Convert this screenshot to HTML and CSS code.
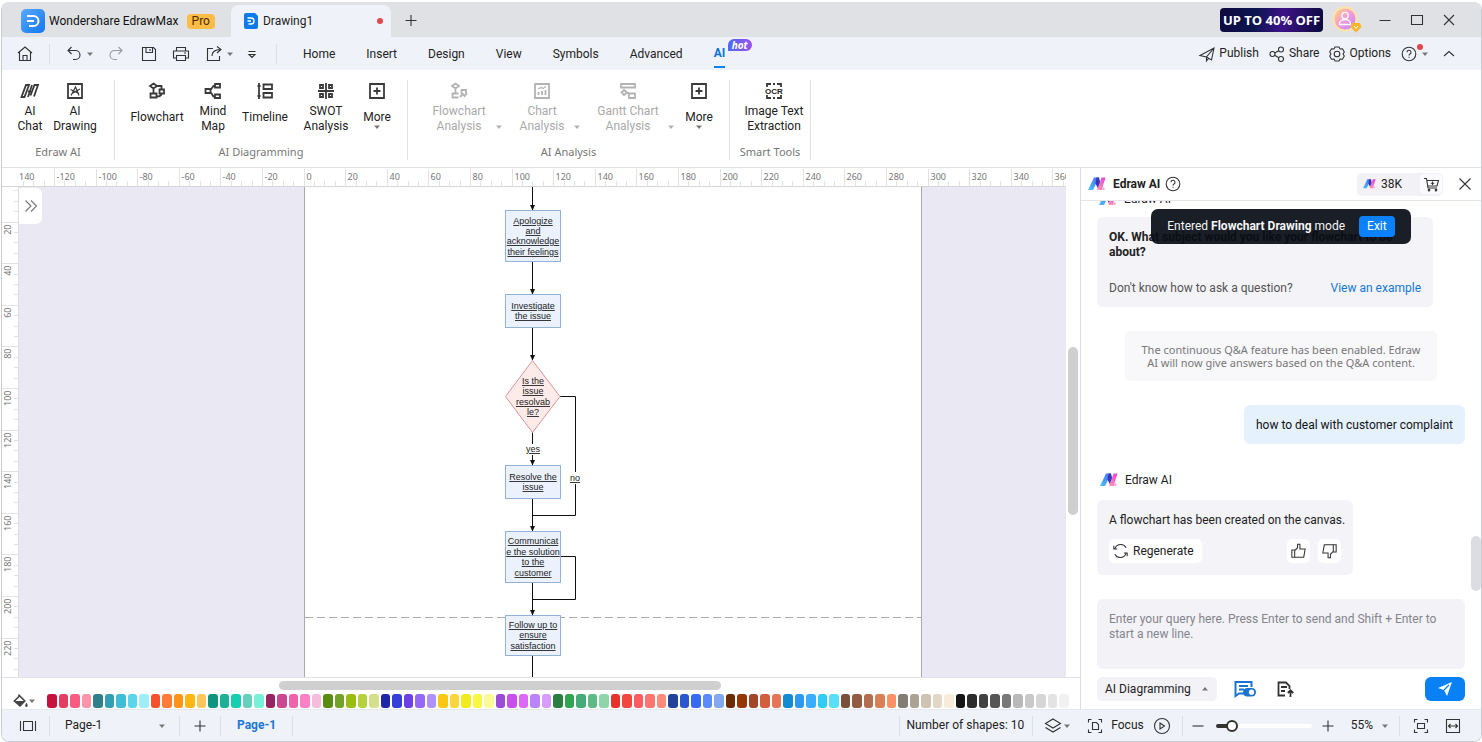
FILE: index.html
```html
<!DOCTYPE html>
<html lang="en">
<head>
	<meta charset="utf-8">
	<title>Wondershare EdrawMax</title>
	<link rel="stylesheet" href="styles.css">
</head>
<body>
	<svg class="defs" width="0" height="0">
		<defs>
			<linearGradient id="grad-blue" x1="0" y1="0" x2="1" y2="1">
				<stop offset="0" stop-color="#5aa9ff"/><stop offset="1" stop-color="#1277f0"/>
			</linearGradient>
			<linearGradient id="grad-left" x1="0" y1="1" x2="1" y2="0">
				<stop offset="0" stop-color="#4fc3ff"/><stop offset="1" stop-color="#3f6bf0"/>
			</linearGradient>
			<linearGradient id="grad-right" x1="0" y1="1" x2="1" y2="0">
				<stop offset="0" stop-color="#ff9fb8"/><stop offset="1" stop-color="#e33bd0"/>
			</linearGradient>
			<linearGradient id="grad-user" x1="0" y1="0" x2="1" y2="1">
				<stop offset="0" stop-color="#ffd27a"/><stop offset="0.5" stop-color="#f59bd8"/><stop offset="1" stop-color="#b685ff"/>
			</linearGradient>
			<symbol id="ai-logo" viewBox="0 0 18 16">
				<path d="M6 1.500h5L5 14H0z" fill="url(#grad-left)"/>
				<path d="M8.500 1.500H11l1.500 6-2.500 5-2.500-5z" fill="#3a34b8"/>
				<path d="M13.500 1.500h4L15 9.500l-1 4.500H9z" fill="url(#grad-right)"/>
				<circle cx="15.500" cy="12.800" r="1.200" fill="#ff9fb8"/>
			</symbol>
			<symbol id="plus-box" viewBox="0 0 20 20">
				<path d="M3 3h14v14H3zM10 6.500v7M6.500 10h7"/>
			</symbol>
			<symbol id="caret" viewBox="0 0 8 8"><path d="M1 2.500h6L4 6z"/></symbol>
		</defs>
	</svg>

	<div class="window">
		<header class="titlebar">
			<svg class="app-logo" viewBox="0 0 24 24" width="24" height="24">
				<rect width="24" height="24" rx="5" fill="url(#grad-blue)"/>
				<path d="M6 7h6.500a5 5 0 0 1 0 10H8M6 12h7" fill="none" stroke="#fff" stroke-width="2"/>
			</svg>
			<span class="app-name">Wondershare EdrawMax</span>
			<span class="pro">Pro</span>
			<div class="doc-tab">
				<svg viewBox="0 0 14 16" width="14" height="16">
					<path d="M2 0h9l3 3v11a2 2 0 0 1-2 2H2a2 2 0 0 1-2-2V2a2 2 0 0 1 2-2z" fill="#0f7bea"/>
					<path d="M3.500 5h3.500a3 3 0 0 1 0 6H4.500M3.500 8H7" fill="none" stroke="#fff" stroke-width="1.300"/>
				</svg>
				<span>Drawing1</span>
				<i class="unsaved"></i>
			</div>
			<button class="icon-btn" aria-label="New tab"><svg class="line" viewBox="0 0 20 20"><path d="M10 5v11M4.500 10.500h11"/></svg></button>
			<div class="spacer"></div>
			<a class="promo" href="#">UP TO 40% OFF</a>
			<svg class="avatar" viewBox="0 0 30 28" width="30" height="28">
				<circle cx="13" cy="13" r="12.500" fill="#ffe3a6"/>
				<circle cx="13" cy="13" r="10.500" fill="url(#grad-user)"/>
				<g fill="none" stroke="#fff" stroke-width="1.300"><circle cx="13" cy="9.500" r="3.200"/><path d="M7.500 18.500v-1a5.500 4 0 0 1 11 0v1z"/></g>
				<path d="M20 17h8l1.500 4-5.500 5.500L18.500 21z" fill="#f7b52c"/>
				<path d="M22 20l2 2.500 2-2.500" fill="none" stroke="#fff"/>
			</svg>
			<div class="win-btns">
				<button class="icon-btn" aria-label="Minimize"><svg class="line" viewBox="0 0 20 20"><path d="M4.500 10.500h11"/></svg></button>
				<button class="icon-btn" aria-label="Maximize"><svg class="line" viewBox="0 0 20 20"><path d="M4.500 5.500h11v9h-11z"/></svg></button>
				<button class="icon-btn" aria-label="Close"><svg class="line" viewBox="0 0 20 20"><path d="M5 5l10 10M15 5L5 15"/></svg></button>
			</div>
		</header>

		<div class="toolbar">
			<div class="quick">
				<button class="icon-btn home-btn" aria-label="Home"><svg class="line" viewBox="0 0 20 20"><path d="M3 9l7-6 7 6M4.500 8v8.500h11V8M8 16.500v-5h4v5"/></svg></button>
				<i class="vline"></i>
				<button class="icon-btn" aria-label="Undo"><svg class="line" viewBox="0 0 20 20"><path d="M7.500 3L4 6.500 7.500 10M4 6.500h7.500a4.500 4.500 0 0 1 0 9H9"/></svg></button>
				<svg class="caret" width="8" height="8"><use href="#caret"/></svg>
				<button class="icon-btn faded redo" aria-label="Redo"><svg class="line" viewBox="0 0 20 20"><path d="M12.500 3L16 6.500 12.500 10M16 6.500H8.500a4.500 4.500 0 0 0 0 9H11"/></svg></button>
				<button class="icon-btn save" aria-label="Save"><svg class="line" viewBox="0 0 20 20"><path d="M3.500 3.500h11l2 2v11h-13zM7 3.500v5h6.500v-5M11 5v2"/></svg></button>
				<button class="icon-btn" aria-label="Print"><svg class="line" viewBox="0 0 20 20"><path d="M5.500 7V3.500h9V7M5.500 14h-3V7h15v7h-3M5.500 11.500h9v5h-9zM13 9h2"/></svg></button>
				<button class="icon-btn export" aria-label="Export"><svg class="line" viewBox="0 0 20 20"><path d="M9 4.500H3.500v12h12V12M8 12c0-4 3-6.500 8.500-6.500M13 2.500l4 3-4 3.500"/></svg></button>
				<svg class="caret" width="8" height="8"><use href="#caret"/></svg>
				<button class="icon-btn" aria-label="Customize"><svg class="line" viewBox="0 0 20 20"><path d="M6.500 7.500h7M7 10.500l3 3 3-3z"/></svg></button>
				<i class="vline"></i>
			</div>
			<nav class="menu">
				<button>Home</button>
				<button>Insert</button>
				<button>Design</button>
				<button>View</button>
				<button>Symbols</button>
				<button>Advanced</button>
				<button class="active">AI<span class="hot">hot</span></button>
			</nav>
			<div class="spacer"></div>
			<div class="actions">
				<button><svg class="line" viewBox="0 0 20 20"><path d="M3 11.500L17 4l-2.500 12-5-3zM17 4l-7.500 9v4l2-2.500"/></svg>Publish</button>
				<button><svg class="line" viewBox="0 0 20 20"><circle cx="5.500" cy="10" r="2.500"/><circle cx="14" cy="5.500" r="2.500"/><circle cx="14" cy="15" r="2.500"/><path d="M7.700 9l4-2.300M7.700 11.200l4 2.500"/></svg>Share</button>
				<button><svg class="line" viewBox="0 0 20 20"><path d="M8 3h4l1 2 2.500-.2 1.800 3.200L16 10l1.300 2-1.800 3.200L13 15l-1 2H8l-1-2-2.500.2L2.700 12 4 10 2.700 8l1.800-3.200L7 5z"/><circle cx="10" cy="10" r="2.800"/></svg>Options</button>
				<button class="help" aria-label="Help"><svg class="line" viewBox="0 0 20 20"><circle cx="10" cy="10" r="6.800"/><path d="M8 8.300a2 2 0 1 1 3 1.700c-.700.400-1 .800-1 1.600M10 12.800v1"/></svg><i class="alert"></i><svg class="caret" width="8" height="8"><use href="#caret"/></svg></button>
				<button class="collapse" aria-label="Collapse ribbon"><svg class="line" viewBox="0 0 20 20"><path d="M5 12l5-4.500 5 4.500"/></svg></button>
			</div>
		</div>

		<section class="ribbon">
			<div class="group g-edraw">
				<div class="tools">
					<button class="tool w40"><svg class="bold" viewBox="0 0 20 20"><path d="M1.500 16L6 4h3L4.500 16zM8 16l4-12M8 10.500h3M10.500 14.500L14.500 4h3.500l-4 11.500"/></svg>AI<br>Chat</button>
					<button class="tool w50"><svg class="bold" viewBox="0 0 20 20"><path d="M3 3h14v14H3z"/><path class="thin" d="M6 14.500L10.500 6l3.500 8.500M5.500 8.500l8.500 4M15 8l-8 4.500"/></svg>AI<br>Drawing</button>
				</div>
				<div class="caption">Edraw AI</div>
			</div>
			<div class="group g-diagram">
				<div class="tools">
					<button class="tool one w60"><svg class="bold" viewBox="0 0 20 20"><path d="M6.500 2.500L10 5 6.500 7.500 3 5zM6.500 7.500V12M3.500 12.500h6v4h-6zM12.500 8.500H17v4h-4.500zM10 5h4.500v3.500M14.500 12.500c0 2-1.500 3-5 3"/></svg>Flowchart</button>
					<button class="tool w52"><svg class="bold" viewBox="0 0 20 20"><path d="M2.500 8h5v4h-5zM12 3h5v3.500h-5zM12 13.500h5V17h-5zM7.500 9l3-4H12M7.500 11l3 4.500H12"/></svg>Mind<br>Map</button>
					<button class="tool one w52"><svg class="bold" viewBox="0 0 20 20"><path d="M4 2v16M2.500 5h3M2.500 15h3M8.500 3.500H17V8H8.500zM8.500 12H17v4.500H8.500z"/></svg>Timeline</button>
					<button class="tool w70"><svg class="bold" viewBox="0 0 20 20"><path d="M10 2v16M2 10h16M4 4h3v3H4zM13 4h3v3h-3zM4 13h3v3H4zM13 13h3v3h-3z"/></svg>SWOT<br>Analysis</button>
					<button class="tool one w32"><svg class="bold"><use href="#plus-box"/></svg>More<svg class="caret" width="8" height="8"><use href="#caret"/></svg></button>
				</div>
				<div class="caption">AI Diagramming</div>
			</div>
			<div class="group g-analysis">
				<div class="tools">
					<button class="tool split w80" disabled><span><svg class="bold" viewBox="0 0 20 20"><path d="M6.500 2.500L10 5 6.500 7.500 3 5zM6.500 7.500V12M9.500 16.500H3.500v-4h6M12.500 13V9H17v4M11 16l3-3 1.500 2 2.500-3"/></svg>Flowchart<br>Analysis</span><svg class="caret" width="8" height="8"><use href="#caret"/></svg></button>
					<button class="tool split w70" disabled><span><svg class="bold" viewBox="0 0 20 20"><path d="M3 3h14v14H3zM6.500 14v-3M10 14v-4M13.500 14v-5"/><path class="thin" d="M6 8l3-1.500 2 1L14 5.500"/></svg>Chart<br>Analysis</span><svg class="caret" width="8" height="8"><use href="#caret"/></svg></button>
					<button class="tool split w86" disabled><span><svg class="bold" viewBox="0 0 20 20"><path d="M3 3h14v3.500H3zM6 9l3 2.500L6 14l-2.500-2.500zM9 12h2M11 12.500h6V17h-6z"/></svg>Gantt Chart<br>Analysis</span><svg class="caret" width="8" height="8"><use href="#caret"/></svg></button>
					<button class="tool one w32"><svg class="bold"><use href="#plus-box"/></svg>More<svg class="caret" width="8" height="8"><use href="#caret"/></svg></button>
				</div>
				<div class="caption">AI Analysis</div>
			</div>
			<div class="group g-smart">
				<div class="tools">
					<button class="tool w64"><svg class="bold" viewBox="0 0 20 20"><path d="M3 6V3h4M9 3h2M13 3h4v3M3 14v3h4M9 17h2M13 17h4v-3"/><text class="ocr" x="10" y="13">OCR</text></svg>Image Text<br>Extraction</button>
				</div>
				<div class="caption">Smart Tools</div>
			</div>
		</section>

		<div class="workspace">
			<main class="editor">
				<svg class="ruler-x" id="ruler-x"></svg>
				<div class="canvas-row">
					<svg class="ruler-y" id="ruler-y"></svg>
					<div class="canvas">
						<svg class="drawing" viewBox="19 187 1047 490" width="1047" height="490">
							<defs>
								<marker id="arrow" markerWidth="6" markerHeight="6" refX="5" refY="3" orient="auto" markerUnits="userSpaceOnUse"><path d="M0 .5L5.500 3 0 5.500z" fill="#111"/></marker>
							</defs>
							<rect class="sheet" x="304.500" y="100" width="617" height="700"/>
							<path class="page-break" d="M305 617.500h617"/>
							<g class="wire">
								<path marker-end="url(#arrow)" d="M532.500 180V210"/>
								<path marker-end="url(#arrow)" d="M532.500 261V294"/>
								<path marker-end="url(#arrow)" d="M532.500 327V360"/>
								<path d="M532.500 432V444"/>
								<path marker-end="url(#arrow)" d="M532.500 455V465"/>
								<path marker-end="url(#arrow)" d="M532.500 498V531"/>
								<path marker-end="url(#arrow)" d="M532.500 582V615"/>
								<path d="M532.500 655V700M560 396.500H575.500V472M575.500 484V515.500H532.500M560 556.500H575.500V599.500H532.500"/>
							</g>
							<g class="box">
								<rect x="505.500" y="210.500" width="55" height="51"/>
								<rect x="505.500" y="294.500" width="55" height="33"/>
								<rect x="505.500" y="465.500" width="55" height="33"/>
								<rect x="505.500" y="531.500" width="55" height="51"/>
								<rect x="505.500" y="615.500" width="55" height="40"/>
							</g>
							<path class="decision" d="M532.500 360.500L560 396.500 532.500 432.500 505.500 396.500z"/>
							<g class="node-text">
								<text x="533" y="224">Apologize</text><text x="533" y="234">and</text><text x="533" y="244">acknowledge</text><text x="533" y="255">their feelings</text>
								<text x="533" y="309">Investigate</text><text x="533" y="319">the issue</text>
								<text x="533" y="384">Is the</text><text x="533" y="394">issue</text><text x="533" y="405">resolvab</text><text x="533" y="415">le?</text>
								<text x="533" y="452">yes</text>
								<text x="575" y="481">no</text>
								<text x="533" y="480">Resolve the</text><text x="533" y="490">issue</text>
								<text x="533" y="544">Communicat</text><text x="533" y="555">e the solution</text><text x="533" y="565">to the</text><text x="533" y="576">customer</text>
								<text x="533" y="628">Follow up to</text><text x="533" y="638">ensure</text><text x="533" y="649">satisfaction</text>
							</g>
						</svg>
						<button class="expand" aria-label="Show symbols"><svg class="line" viewBox="0 0 20 20"><path d="M4.500 4.500L10 10l-5.500 5.500M10 4.500l5.500 5.500-5.500 5.500"/></svg></button>
					</div>
					<div class="vscroll"><i></i></div>
				</div>
				<div class="hscroll"><i></i></div>
				<div class="palette">
					<button class="fill" aria-label="Fill colour"><svg viewBox="0 0 20 20" width="16" height="16"><path d="M8 2l8 8-6 6-7-6 6-6" fill="none" stroke="#444" stroke-width="2"/><path d="M4 10h12l-6 6z" fill="#444"/><path d="M18 12c1 2 1.500 3 1.500 4a1.500 1.500 0 0 1-3 0c0-1 .500-2 1.500-4z" fill="#444"/></svg><svg class="caret" width="8" height="8"><use href="#caret"/></svg></button>
					<div class="swatches" id="swatches"></div>
				</div>
			</main>

			<aside class="panel">
				<div class="panel-head">
					<svg width="18" height="16"><use href="#ai-logo"/></svg>
					<h2>Edraw AI</h2>
					<button class="icon-btn" aria-label="About Edraw AI"><svg class="line" viewBox="0 0 20 20"><circle cx="10" cy="10" r="6.800"/><path d="M8 8.300a2 2 0 1 1 3 1.700c-.700.400-1 .800-1 1.600M10 12.800v1"/></svg></button>
					<div class="spacer"></div>
					<div class="credits">
						<span><svg width="13" height="12"><use href="#ai-logo"/></svg>38K</span>
						<button class="icon-btn" aria-label="Buy credits"><svg class="line" viewBox="0 0 20 20"><path d="M3 4.500h2.500L7 14h9M6 6.500h11.500L16 12H7M11.500 7.500v3.500M9.800 9.200h3.500"/><circle cx="8" cy="16.200" r=".8"/><circle cx="15" cy="16.200" r=".8"/></svg></button>
					</div>
					<button class="icon-btn" aria-label="Close panel"><svg class="line" viewBox="0 0 20 20"><path d="M4.500 4.500l11 11M15.500 4.500l-11 11"/></svg></button>
				</div>
				<div class="toast"><span>Entered <b>Flowchart Drawing</b> mode</span><button>Exit</button></div>
				<div class="chat">
					<div class="sender cut"><svg width="18" height="16"><use href="#ai-logo"/></svg>Edraw AI</div>
					<div class="bubble ask">
						<b>OK. What subject would you like your flowchart to be about?</b>
						<p><span>Don't know how to ask a question?</span><a href="#">View an example</a></p>
					</div>
					<div class="notice">The continuous Q&amp;A feature has been enabled. Edraw AI will now give answers based on the Q&amp;A content.</div>
					<div class="mine">how to deal with customer complaint</div>
					<div class="sender"><svg width="18" height="16"><use href="#ai-logo"/></svg>Edraw AI</div>
					<div class="bubble reply">
						A flowchart has been created on the canvas.
						<div class="reply-btns">
							<button class="regen"><svg class="line" viewBox="0 0 20 20"><path d="M4 8a6.500 6.500 0 0 1 12-1.500M16 12a6.500 6.500 0 0 1-12 1.500M3 4.500V8h3.500M17 15.500V12h-3.500"/></svg>Regenerate</button>
							<div class="spacer"></div>
							<button class="vote" aria-label="Like"><svg class="line" viewBox="0 0 20 20"><path d="M3 9h3v7.500H3zM6 9.500l3-3V3h2.500v5h5.500l-1.500 8.500H6"/></svg></button>
							<button class="vote" aria-label="Dislike"><svg class="line" viewBox="0 0 20 20"><path d="M14 3.500h3V11h-3zM14 10.500l-3 3V17H8.500v-5H3l1.500-8.500H14"/></svg></button>
						</div>
					</div>
					<i class="chat-thumb"></i>
				</div>
				<textarea class="query" aria-label="Query" placeholder="Enter your query here. Press Enter to send and Shift + Enter to start a new line."></textarea>
				<div class="panel-foot">
					<button class="mode">AI Diagramming<svg class="caret up" width="8" height="8"><use href="#caret"/></svg></button>
					<button class="big-icon" aria-label="Continuous chat"><svg viewBox="0 0 24 20" width="24" height="20"><path d="M11 14.500H6L2.500 17V3h16v5M6 7h9M6 10.500h5" fill="none" stroke="#1b73d0" stroke-width="2"/><rect x="10" y="9" width="13" height="8.500" rx="4.200" fill="#1b73d0"/><circle cx="18.500" cy="13.200" r="2.600" fill="#fff"/></svg></button>
					<button class="big-icon" aria-label="Upload"><svg viewBox="0 0 20 20" width="20" height="20"><path d="M10 16.500H3.500v-13H11l3.500 3.500v3M6 8h6M6 12h4M15.500 18v-6M12.800 14l2.700-2.700 2.700 2.700" fill="none" stroke="#333" stroke-width="1.800"/></svg></button>
					<div class="spacer"></div>
					<button class="send" aria-label="Send"><svg viewBox="0 0 20 20" width="20" height="20"><path d="M3 9L17 3l-5 14-3-6z" fill="#fff"/><path d="M9 11l5-5" stroke="#0a80f5" stroke-width="1.300"/></svg></button>
				</div>
			</aside>
		</div>

		<footer class="status">
			<button class="icon-btn view-btn" aria-label="Page view"><svg class="line" viewBox="0 0 20 20"><path d="M2.500 5v10M5.500 5.500h9v9h-9zM17.500 5v10"/></svg></button>
			<i class="vline"></i>
			<div class="page-pick">
				<select aria-label="Page"><option>Page-1</option></select>
				<svg class="caret" width="8" height="8"><use href="#caret"/></svg>
			</div>
			<i class="vline"></i>
			<button class="icon-btn add" aria-label="Add page"><svg class="line" viewBox="0 0 20 20"><path d="M10 4.500v11M4.500 10h11"/></svg></button>
			<i class="vline"></i>
			<button class="page-tab">Page-1</button>
			<i class="vline"></i>
			<div class="spacer"></div>
			<i class="vline"></i>
			<span class="count">Number of shapes: 10</span>
			<i class="vline"></i>
			<button class="icon-btn layers" aria-label="Layers"><svg class="line" viewBox="0 0 20 20"><path d="M10 3l7.500 4.500L10 12 2.500 7.500zM2.500 11.500L10 16l7.500-4.500"/></svg></button>
			<svg class="caret" width="8" height="8"><use href="#caret"/></svg>
			<button class="focus"><svg class="line" viewBox="0 0 20 20"><path d="M3.500 6.500v-3h3M13.500 3.500h3v3M3.500 13.500v3h3M13.500 16.500h3v-3M7.500 6.500h4l2 2v5h-6z"/></svg>Focus</button>
			<button class="icon-btn play" aria-label="Present"><svg class="line" viewBox="0 0 20 20"><circle cx="10" cy="10" r="7.500"/><path d="M8 7l4.500 3L8 13z"/></svg></button>
			<i class="vline"></i>
			<button class="icon-btn minus" aria-label="Zoom out"><svg class="line" viewBox="0 0 20 20"><path d="M4.500 10h11"/></svg></button>
			<input class="zoom" type="range" min="0" max="100" value="12" aria-label="Zoom">
			<button class="icon-btn" aria-label="Zoom in"><svg class="line" viewBox="0 0 20 20"><path d="M10 4.500v11M4.500 10h11"/></svg></button>
			<button class="percent">55%<svg class="caret" width="8" height="8"><use href="#caret"/></svg></button>
			<i class="vline"></i>
			<button class="icon-btn fit" aria-label="Fit page"><svg class="line" viewBox="0 0 20 20"><path d="M3.500 6.500v-3h3M13.500 3.500h3v3M3.500 13.500v3h3M13.500 16.500h3v-3M6.500 7.500h7v5h-7z"/></svg></button>
			<button class="icon-btn" aria-label="Fit width"><svg class="line" viewBox="0 0 20 20"><path d="M3.500 3.500h13v13h-13zM5.500 10h9M7.500 8l-2 2 2 2M12.500 8l2 2-2 2"/></svg></button>
		</footer>
	</div>

	<script>
		const colors = [
			"c8103e", "e63d63", "f75c81", "fb94a8",
			"2f7f8d", "31a0b5", "3fbdd6", "5ad6ec", "9deef8",
			"f8502c", "ff7c38", "ff9418", "fcb712", "fcc65c",
			"0f9480", "1cb196", "16cfaf", "66d0bd", "79eed9",
			"962462", "cc4791", "ee63ac", "fb80c6", "f7bcdc",
			"5a8c12", "74a228", "9bbd12", "b5d23e", "d3e18d",
			"1f27a8", "3440d8", "6d3fe8", "9668f8", "af91fb",
			"fac814", "f9d63b", "f2eb20", "f8f843", "fbfa98",
			"994cd6", "c94fec", "dc68f5", "bb83fa", "d79dfa",
			"2b7d40", "32a44f", "46ab78", "5dba85", "8ed6aa",
			"e8312b", "f2463e", "fa5c61", "fd7470", "fd8c7d",
			"21419b", "2b58cf", "3769f4", "5b8bfb", "82a9ef",
			"6b2b04", "963602", "a34529", "d15c3e", "e47556",
			"128bd2", "2999f2", "3aadfc", "2fcdf5", "5adff9",
			"79503a", "935b41", "b36e50", "d87f55", "fb9064",
			"827c73", "aca294", "cfc4b2", "e3d6c5", "f6ecd9",
			"151515", "2c2c2c", "414141", "555555", "787878", "b9b9b9", "c9c9c9", "d6d6d6", "e3e3e3", "f1f1f1", "ffffff"
		];
		const swatches = document.getElementById("swatches");
		colors.forEach((color) => {
			const swatch = document.createElement("button");
			swatch.style.background = "#" + color;
			swatch.setAttribute("aria-label", "#" + color);
			swatches.appendChild(swatch);
		});

		// 20 millimetres on the sheet take 41.6 pixels at this zoom
		const scale = 2.08;
		let marks = "";
		for (let mm = -135; mm <= 365; mm += 5) {
			const x = Math.round(302.5 + mm * scale) - 0.5;
			const major = mm % 20 === 0;
			marks += `<path d="M${x} ${major ? 1 : 13}V19"/>`;
			if (major) marks += `<text x="${x + 2}" y="12">${mm}</text>`;
		}
		document.getElementById("ruler-x").innerHTML = `<text x="17" y="12">140</text>` + marks;

		marks = "";
		for (let mm = 5; mm <= 235; mm += 5) {
			const y = Math.round(mm * scale - 7) + 0.5;
			const major = mm % 20 === 0;
			marks += `<path d="M${major ? 0 : 12} ${y}H17"/>`;
			if (major) marks += `<text class="turned" transform="translate(9 ${y + 2}) rotate(-90)">${mm}</text>`;
		}
		document.getElementById("ruler-y").innerHTML = marks;
	</script>
</body>
</html>
```
FILE: styles.css
```css
* {
	box-sizing: border-box;
}

body {
	margin: 0;
	height: 100vh;
	padding: 2px 0 0 1px;
	background: #fff;
	font: 12px/15px Roboto, "Noto Sans", sans-serif;
	color: #222;
}

button, select, textarea {
	font: inherit;
	color: inherit;
	background: none;
	border: 0;
	padding: 0;
	margin: 0;
}

svg {
	flex: none;
}

.defs {
	position: absolute;
}

.window {
	height: 100%;
	display: flex;
	flex-direction: column;
	border: 1px solid #c9cdd1;
	border-width: 0 1px 1px;
	border-radius: 8px;
	overflow: hidden;
}

.spacer {
	flex: 1;
}

.line {
	width: 20px;
	height: 20px;
	fill: none;
	stroke: #333;
	stroke-width: 1.1;
}

.caret {
	fill: #777;
	stroke: none;
}

.icon-btn {
	display: flex;
	flex: none;
	width: 20px;
	height: 20px;
}

.vline {
	width: 1px;
	height: 20px;
	background: #dcdfe6;
	flex: none;
}

/* title bar */
.titlebar {
	display: flex;
	align-items: center;
	height: 35px;
	padding: 0 22px 0 19px;
	background: #dfe1e4;
	flex: none;
}

.app-logo {
	margin-top: 3px;
}

.app-name {
	margin: 3px 8px 0 4px;
	color: #111;
}

.pro {
	margin-top: 3px;
	padding: 0 5px;
	border-radius: 4px;
	background: #fdbc45;
	color: #4b2d00;
}

.doc-tab {
	align-self: flex-end;
	display: flex;
	align-items: center;
	gap: 5px;
	width: 160px;
	height: 32px;
	margin: 0 10px 0 16px;
	padding: 0 8px 0 13px;
	border-radius: 8px 8px 0 0;
	background: #f0f2f9;
}

.unsaved, .alert {
	width: 6px;
	height: 6px;
	border-radius: 50%;
	background: #e0474c;
}

.unsaved {
	margin-left: auto;
}

.promo {
	width: 103px;
	border-radius: 4px;
	background: linear-gradient(100deg, #10093f, #0b1550 35%, #3c1287 60%, #0a0a3c);
	color: #fff;
	font: bold 13px/24px "Open Sans", sans-serif;
	text-align: center;
	text-decoration: none;
	white-space: nowrap;
}

.avatar {
	margin: 0 13px 0 9px;
}

.win-btns {
	display: flex;
	gap: 12px;
}

/* menu row */
.toolbar {
	display: flex;
	align-items: center;
	height: 33px;
	padding: 0 22px 0 13px;
	background: #f0f2f9;
	flex: none;
}

.quick, .actions, .actions button {
	display: flex;
	align-items: center;
}

.quick .vline {
	margin: 0 14px;
}

.quick .caret {
	margin: 0 2px;
}

.faded {
	opacity: 0.45;
}

.redo {
	margin: 0 8px 0 10px;
}

.save {
	margin: 0 12px 0 5px;
}

.export {
	margin-left: 13px;
}

.quick .caret + .icon-btn:not(.redo) {
	margin-left: 6px;
}

.menu {
	display: flex;
	gap: 31px;
	margin-left: 12px;
}

.menu button {
	position: relative;
	height: 29px;
	padding-top: 2px;
}

.menu .active {
	color: #0b72d8;
	font-weight: bold;
	border-bottom: 2px solid #0b84f3;
}

.hot {
	position: absolute;
	left: 14px;
	top: 0;
	padding: 0 4px;
	border-radius: 6px 6px 6px 0;
	background: linear-gradient(90deg, #4f68f5, #9a4ff0);
	color: #fff;
	font: italic bold 10px/12px "Open Sans", sans-serif;
}

.actions {
	gap: 8px;
}

.actions button {
	gap: 2px;
}

.help {
	position: relative;
}

.alert {
	position: absolute;
	right: 6px;
	top: 0;
}

.collapse {
	margin-left: 2px;
}

/* ribbon */
.ribbon {
	display: flex;
	height: 98px;
	padding-top: 10px;
	border-bottom: 1px solid #e2e2e6;
	flex: none;
}

.group {
	display: flex;
	flex-direction: column;
	height: 80px;
	padding-bottom: 1px;
	border-right: 1px solid #e2e2e6;
}

.tools {
	display: flex;
	flex: 1;
}

.g-edraw .tools {
	padding: 0 14px 0 8px;
}

.g-diagram .tools {
	padding: 0 14px 0 12px;
}

.g-analysis .tools {
	gap: 8px;
	padding: 0 14px 0 15px;
}

.g-smart .tools {
	padding: 0 4px 0 12px;
}

.tool {
	display: flow-root;
	align-self: flex-start;
	white-space: nowrap;
	text-align: center;
}

.tool .bold {
	display: block;
	width: 20px;
	height: 20px;
	margin: 1px auto 3px;
	fill: none;
	stroke: #3a3a3a;
	stroke-width: 1.8;
}

.bold .thin {
	stroke-width: 1.2;
}

.tool.one .bold {
	margin-bottom: 9px;
}

.one .caret {
	display: block;
	margin: -2px auto 0;
}

.split {
	display: flex;
	align-items: flex-end;
	color: #a9a9a9;
}

.split span {
	flex: 1;
}

.tool.split .bold {
	stroke: #b3b3b3;
}

.split .caret {
	fill: #b3b3b3;
	margin-bottom: 3px;
}

.ocr {
	font: bold 8px "Liberation Sans", sans-serif;
	text-anchor: middle;
	fill: #222;
	stroke: none;
}

.w32 { width: 32px; }
.w40 { width: 40px; }
.w50 { width: 50px; }
.w52 { width: 52px; }
.w60 { width: 60px; }
.w64 { width: 64px; }
.w70 { width: 70px; }
.w80 { width: 80px; }
.w86 { width: 86px; }

.caption {
	color: #777;
	text-align: center;
	font: 11px/15px "Noto Sans", sans-serif;
	white-space: nowrap;
}

/* editor */
.workspace {
	flex: 1;
	display: flex;
	min-height: 0;
}

.editor {
	flex: 1;
	min-width: 0;
	display: flex;
	flex-direction: column;
}

.ruler-x {
	width: calc(100% - 14px);
	height: 19px;
	border-bottom: 1px solid #d5d5d5;
}

.ruler-y {
	width: 17px;
	height: 100%;
	border-right: 1px solid #ddd;
}

.ruler-x path, .ruler-y path {
	stroke: #e2e2e2;
}

.ruler-x text, .ruler-y text {
	font: 9px "Noto Sans", sans-serif;
	fill: #777;
}

.ruler-y .turned {
	text-anchor: end;
}

.canvas-row {
	flex: 1;
	display: flex;
	min-height: 0;
}

.canvas {
	position: relative;
	flex: 1;
	min-width: 0;
	overflow: hidden;
	background: #eae9f3;
}

.drawing {
	display: block;
}

.sheet {
	fill: #fff;
	stroke: #a9a9b0;
}

.page-break {
	stroke: #aaa;
	stroke-dasharray: 8 4;
}

.wire path {
	fill: none;
	stroke: #111;
	stroke-width: 1;
}

.box rect {
	fill: #ebf2fd;
	stroke: #92b3d8;
}

.decision {
	fill: #fdebea;
	stroke: #de9292;
}

.node-text text {
	font: 9px "Liberation Sans", sans-serif;
	text-anchor: middle;
	text-decoration: underline;
	fill: #222;
}

.expand {
	position: absolute;
	left: 0;
	top: 1px;
	width: 23px;
	height: 36px;
	padding: 8px 2px;
	border-radius: 0 6px 6px 0;
	background: #fff;
}

.expand .line {
	stroke: #777;
}

.vscroll {
	width: 14px;
	padding: 160px 2px 0;
}

.vscroll i {
	display: block;
	height: 168px;
	border-radius: 5px;
	background: #cfcfcf;
}

.hscroll {
	height: 15px;
	padding-top: 3px;
	border-top: 1px solid #e2e2e6;
}

.hscroll i {
	display: block;
	width: 41%;
	height: 9px;
	margin-left: 25.7%;
	border-radius: 5px;
	background: #cfcfcf;
}

.palette {
	display: flex;
	align-items: center;
	height: 17px;
}

.fill {
	display: flex;
	align-items: center;
	width: 45px;
	padding-left: 10px;
}

.swatches {
	flex: 1;
	display: flex;
	gap: 2px;
}

.swatches button {
	flex: 1;
	height: 14px;
	border-radius: 3px;
}

/* AI panel */
.panel {
	position: relative;
	width: 401px;
	flex: none;
	display: flex;
	flex-direction: column;
	border-left: 1px solid #dcdce2;
}

.panel-head {
	display: flex;
	align-items: center;
	height: 33px;
	padding: 0 6px 0 7px;
	border-bottom: 1px solid #e4e4ea;
	flex: none;
}

.panel-head h2 {
	margin: 0 3px 0 7px;
	font-size: 12px;
}

.credits {
	display: flex;
	align-items: center;
	height: 23px;
	margin-right: 12px;
	padding: 1px;
	border-radius: 5px;
	background: #f1f1f6;
}

.credits span {
	display: flex;
	align-items: center;
	gap: 5px;
	width: 62px;
	padding-left: 5px;
}

.credits .icon-btn {
	width: 22px;
	padding-left: 1px;
	border-radius: 4px;
	background: #fbfbfd;
}

.toast {
	position: absolute;
	z-index: 1;
	left: 70px;
	top: 41px;
	width: 260px;
	display: flex;
	align-items: center;
	justify-content: center;
	gap: 14px;
	height: 35px;
	border-radius: 7px;
	background: rgba(9, 13, 22, 0.93);
	color: #f5f5f5;
	white-space: nowrap;
}

.toast button {
	padding: 3px 8px;
	border-radius: 4px;
	background: #0b82fb;
	color: #fff;
}

.chat {
	position: relative;
	flex: 1;
	min-height: 0;
	overflow: hidden;
	display: flex;
	flex-direction: column;
	align-items: flex-start;
	padding: 0 16px;
}

.sender {
	display: flex;
	align-items: center;
	gap: 7px;
	height: 16px;
	margin: 28px 0 12px 3px;
}

.sender.cut {
	margin: -10px 0 10px 2px;
	flex: none;
}

.bubble {
	padding: 13px 12px 11px;
	border-radius: 6px;
	background: #f3f3f8;
}

.ask {
	width: 336px;
	height: 90px;
}

.ask p {
	display: flex;
	justify-content: space-between;
	margin: 21px 0 0;
	color: #555;
}

.ask a {
	color: #1479d6;
	text-decoration: none;
}

.notice {
	width: 312px;
	margin: 24px 0 0 28px;
	padding: 12px;
	border-radius: 5px;
	background: #f8f8fb;
	color: #777;
	font: 11px/13px "Noto Sans", sans-serif;
	text-align: center;
}

.mine {
	align-self: flex-end;
	margin-top: 24px;
	padding: 13px 12px 11px;
	border-radius: 6px;
	background: #e5f2fe;
	color: #111;
}

.reply {
	width: 256px;
	white-space: nowrap;
}

.reply-btns {
	display: flex;
	gap: 8px;
	margin-top: 11px;
}

.reply-btns button {
	display: flex;
	align-items: center;
	height: 24px;
	border-radius: 5px;
	background: #fff;
}

.reply-btns {
	margin-bottom: 1px;
}

.regen {
	gap: 3px;
	padding: 0 8px 0 2px;
}

.vote {
	padding: 0 2px;
}

.vote .line, .regen .line {
	width: 19px;
}

.chat-thumb {
	position: absolute;
	right: 0;
	bottom: 0;
	width: 10px;
	height: 55px;
	border-radius: 5px;
	background: #dcdce2;
}

.query {
	height: 70px;
	margin: 8px 16px 0;
	padding: 13px 12px;
	border-radius: 6px;
	background: #f2f2f7;
	resize: none;
	flex: none;
}

.query::placeholder {
	color: #84848c;
}

.panel-foot {
	display: flex;
	align-items: center;
	height: 40px;
	padding: 0 16px;
	flex: none;
}

.mode {
	display: flex;
	align-items: center;
	justify-content: space-between;
	width: 120px;
	height: 24px;
	margin-right: 16px;
	padding: 0 8px;
	border-radius: 5px;
	background: #f2f2f7;
}

.up {
	transform: rotate(180deg);
}

.big-icon {
	display: flex;
	margin-right: 18px;
}

.send {
	display: flex;
	justify-content: center;
	width: 40px;
	padding: 2px;
	border-radius: 6px;
	background: #0a80f5;
}

/* status bar */
.status {
	display: flex;
	align-items: center;
	height: 32px;
	padding: 0 18px 0 16px;
	background: #f0f2f9;
	border-top: 1px solid #e6e8ef;
	flex: none;
}

.view-btn {
	margin-right: 11px;
}

.page-pick {
	display: flex;
	align-items: center;
	width: 129px;
	padding: 0 13px 0 15px;
}

.page-pick select {
	flex: 1;
	appearance: none;
}

.add {
	margin: 0 10px;
}

.page-tab {
	padding: 0 16px;
	color: #1b77d2;
	font-weight: bold;
}

.count {
	margin: 0 8px 0 6px;
}

.layers {
	margin-left: 10px;
}

.focus {
	display: flex;
	align-items: center;
	gap: 6px;
	margin: 0 8px 0 14px;
}

.play {
	margin-right: 10px;
}

.minus {
	margin: 0 8px 0 5px;
}

.zoom {
	appearance: none;
	width: 96px;
	height: 4px;
	margin: 0 6px 0 0;
	border-radius: 2px;
	background: linear-gradient(90deg, #333 14%, #fff 14%);
}

.zoom::-webkit-slider-thumb {
	appearance: none;
	width: 12px;
	height: 12px;
	border: 2px solid #333;
	border-radius: 50%;
	background: #fff;
}

.percent {
	display: flex;
	align-items: center;
	gap: 8px;
	margin: 0 10px 0 13px;
}

.fit {
	margin: 0 12px 0 11px;
}
```
